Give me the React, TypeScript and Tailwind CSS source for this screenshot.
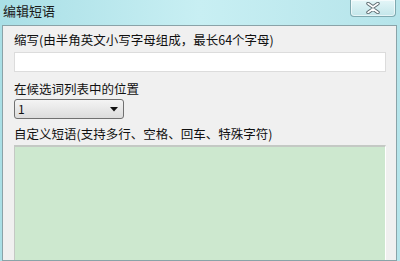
import React from 'react'

// Win7 style "edit phrase" dialog

const font = { fontFamily: '"Noto Sans CJK SC", "Liberation Sans", sans-serif' }

function CloseButton() {
  return (
    <div className="absolute right-[4px] top-0 w-[46px] h-[17px] rounded-b-[4px] border border-t-0 border-[#7fa9b0] bg-gradient-to-b from-[#e4f6f8] to-[#c3e6ea] flex items-center justify-center shadow-[inset_0_0_0_1px_rgba(255,255,255,0.6)]">
      <svg width="16" height="12" viewBox="0 0 16 12">
        <path d="M3 1.5 L8 5 L13 1.5 M3 10.5 L8 7 L13 10.5" fill="none" stroke="#5c6a70" strokeWidth="3.4" strokeLinecap="round" strokeLinejoin="round" />
        <path d="M3 1.5 L8 5 L13 1.5 M3 10.5 L8 7 L13 10.5" fill="none" stroke="#ffffff" strokeWidth="1.6" strokeLinecap="round" strokeLinejoin="round" />
      </svg>
    </div>
  )
}

export default function App() {
  return (
    <div className="w-[400px] h-[261px] overflow-hidden bg-gradient-to-r from-[#a9dfe6] via-[#c8eff3] to-[#b5e4ea] flex flex-col" style={font}>
      <div className="relative h-[25px] shrink-0">
        <div className="pl-[3px] pt-[2px] text-[13px] leading-[18px] text-[#1a1a1a]">编辑短语</div>
        <CloseButton />
      </div>
      <div className="flex-1 ml-[2px] mr-[3px] border border-[#8aa3a8] bg-[#f0f0f0] px-[11px] pt-[6px] flex flex-col text-[12.5px] leading-[16px] text-[#111]">
        <div>缩写(由半角英文小写字母组成，最长64个字母)</div>
        <input className="mt-[4px] h-[20px] w-[372px] bg-white border border-[#dcdcdc] outline-none" />
        <div className="mt-[9px]">在候选词列表中的位置</div>
        <div className="mt-[2px] h-[20px] w-[110px] rounded-[3px] border border-[#707070] bg-gradient-to-b from-[#f4f4f4] to-[#dcdcdc] flex items-center justify-between pl-[3px] pr-[5px] text-[12px]">
          <span>1</span>
          <svg width="8" height="5" viewBox="0 0 8 5"><path d="M0 0 H8 L4 4.5 Z" fill="#111" /></svg>
        </div>
        <div className="mt-[7px]">自定义短语(支持多行、空格、回车、特殊字符)</div>
        <div className="mt-[3px] w-[372px] flex-1 bg-[#cde8cf] border-t-2 border-l border-r border-[#c4c9c4] border-r-white" />
      </div>
    </div>
  )
}
